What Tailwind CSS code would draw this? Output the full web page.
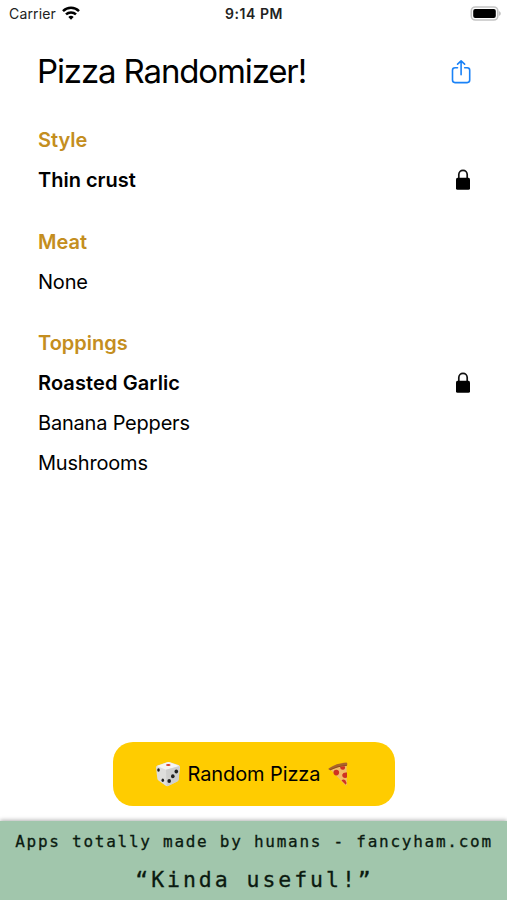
<!DOCTYPE html>
<html lang="en">
<head>
  <meta charset="UTF-8" />
  <meta name="viewport" content="width=device-width, initial-scale=1.0" />
  <title>Pizza Randomizer!</title>

  <!-- Tailwind CSS -->
  <script src="https://cdn.jsdelivr.net/npm/@tailwindcss/browser@4"></script>
</head>
<body class="bg-white text-black font-['Inter',sans-serif]">
<div class="flex flex-col h-[900px] w-[507px] overflow-hidden">

  <!-- Status Bar -->
  <header class="grid grid-cols-3 items-center h-[26px] mb-[2px] pl-[9px] pr-[6px] text-[14px] text-[#222]">
    <div class="flex items-center gap-[6px]">
      <span class="tracking-[0.15px]">Carrier</span>
      <svg class="w-[18px] h-[14px] -mt-[1px]" viewBox="0 0 18 14" fill="none" stroke="#000" stroke-width="2.5">
        <path d="M1 5.1a11.5 11.5 0 0 1 16 0" />
        <path d="M4 8.4a7.2 7.2 0 0 1 10 0" />
        <path d="M9 13.8 6.3 11.1a3.8 3.8 0 0 1 5.4 0Z" fill="#000" stroke="none" />
      </svg>
    </div>
    <span class="text-center font-semibold tracking-[0.55px] -ml-[2px] whitespace-nowrap">9:14 PM</span>
    <svg class="w-[31px] h-[15px] justify-self-end" viewBox="0 0 31 15">
      <rect x="1.3" y="1" width="26.5" height="13" rx="4" fill="#fff" stroke="#c4c4c4" stroke-width="1.6" />
      <rect x="3.2" y="3" width="22.6" height="9" rx="2" />
      <path d="M29.3 5.2c1.7.6 1.7 4 0 4.6Z" fill="#aaa" />
    </svg>
  </header>

  <!-- Pizza -->
  <main class="flex-1 pl-[38px] pr-[36px] text-[20px]">
    <div class="flex justify-between items-center h-[88px]">
      <h1 class="text-[33px] tracking-[-1.13px] -ml-[1px] whitespace-nowrap">Pizza Randomizer!</h1>
      <button aria-label="Share">
        <svg class="w-5 h-6" viewBox="0 0 20 24" fill="none" stroke="#1a82f7" stroke-width="1.6" stroke-linecap="round" stroke-linejoin="round">
          <path d="M6.5 7.8H4A2.5 2.5 0 0 0 1.5 10.3v9.8A2.5 2.5 0 0 0 4 22.6h12.2a2.5 2.5 0 0 0 2.5-2.5v-9.8a2.5 2.5 0 0 0-2.5-2.5h-2.5" />
          <path d="M10.1 14.8V1M6.6 4.2 10.1.9l3.5 3.3" />
        </svg>
      </button>
    </div>

    <section class="mt-[4px]">
      <h2 class="h-10 leading-10 font-semibold text-[#c48e20]">Style</h2>
      <div class="flex justify-between items-center h-10 font-semibold">
        <span>Thin crust</span>
        <svg class="w-4 h-[22px]" viewBox="0 0 16 22">
          <path d="M3.8 11V5.5a4.2 4.2 0 0 1 8.4 0V11" fill="none" stroke="#111" stroke-width="1.7" />
          <rect x="1" y="8.8" width="14" height="12" rx="1.6" />
        </svg>
      </div>
    </section>

    <section class="mt-[22px]">
      <h2 class="h-10 leading-10 font-semibold text-[#c48e20]">Meat</h2>
      <div class="flex items-center h-10"><span class="tracking-[-0.2px]">None</span></div>
    </section>

    <section class="mt-[21px]">
      <h2 class="h-10 leading-10 font-semibold text-[#c48e20]">Toppings</h2>
      <div class="flex justify-between items-center h-10 font-semibold">
        <span class="tracking-[0.1px]">Roasted Garlic</span>
        <svg class="w-4 h-[22px]" viewBox="0 0 16 22">
          <path d="M3.8 11V5.5a4.2 4.2 0 0 1 8.4 0V11" fill="none" stroke="#111" stroke-width="1.7" />
          <rect x="1" y="8.8" width="14" height="12" rx="1.6" />
        </svg>
      </div>
      <div class="flex items-center h-10"><span class="tracking-[-0.2px]">Banana Peppers</span></div>
      <div class="flex items-center h-10"><span class="tracking-[-0.2px]">Mushrooms</span></div>
    </section>
  </main>

  <!-- Random Button -->
  <button class="flex items-center self-center w-[282px] h-[64px] mb-[15px] pl-[42px] rounded-[20px] bg-[#ffcc00] text-[20px]">
    <svg class="w-[26px] h-[26px]" viewBox="0 0 26 26">
      <path d="M2.5 4.5 12 1.2Q13.5.7 15 1.2L23.5 4Q25.2 4.8 25 6.4L23.6 18.5Q23.4 19.8 22.2 20.5L13 25Q11.8 25.5 10.7 24.8L3.5 19.5Q2.5 18.8 2.3 17.5L1 6.5Q1 5 2.5 4.5Z" fill="#dededc" />
      <path d="M2 5 12.5 1.2Q13.5.9 14.5 1.2L24.3 5 11 8.7Z" fill="#f5f5f3" />
      <path d="M11 8.7 24.8 5 23.6 18.5Q23.4 19.8 22.2 20.5L13 25Q11.8 25.4 11.5 24Z" fill="#cfcfcd" />
      <ellipse cx="13.3" cy="4" rx="2.3" ry="1.1" fill="#d5402f" />
      <g fill="#222">
        <ellipse cx="3.5" cy="9" rx="1.3" ry="1.8" />
        <ellipse cx="7.8" cy="19.3" rx="1.3" ry="1.8" />
        <ellipse cx="21.3" cy="10.6" rx="1.8" ry="2" />
        <ellipse cx="17.8" cy="15.2" rx="1.8" ry="2" />
        <ellipse cx="14.2" cy="20" rx="1.8" ry="2" />
      </g>
    </svg>
    <span class="ml-[7px] tracking-[-0.1px] whitespace-nowrap">Random Pizza</span>
    <svg class="w-5 h-6 ml-[8px]" viewBox="0 0 20 24">
      <path d="M2 7 18.5 3.2 19 22.5Q18 24.3 16.5 22.5Z" fill="#f1bd68" />
      <path d="M.5 6.5Q8 1.2 18.5.5 20 1.5 19 3.7 9.5 4.3 2.4 8.3.2 8.3.5 6.5Z" fill="#a9632c" />
      <path d="M2 7.9Q9.5 3.9 18.8 3.4" fill="none" stroke="#7a3a16" stroke-width=".6" />
      <g fill="#cf3222">
        <circle cx="8.3" cy="10.6" r="2.8" />
        <path d="M12 5.3q2.7-1.3 5-.8.5 3-2 3.300-2.500.2-3-2.500Z" />
        <path d="M19 10.5q-4-.5-4.800 2.300-.2 3 3 3.200l1.800-.5Z" />
        <path d="M13.5 18.5q1.800-1.800 4 0 1.800 2.500.3 4.300Z" />
      </g>
    </svg>
  </button>

  <!-- Banner -->
  <footer class="flex flex-col items-center h-[79px] bg-[#a1c6ac] text-[#0b1a10] font-['DejaVu_Sans_Mono',monospace] whitespace-nowrap shadow-[0_-1px_4px_rgba(0,0,0,0.3)]">
    <p class="mt-[10px] ml-[1px] h-[22px] leading-[22px] text-[16px] tracking-[1.74px] [-webkit-text-stroke:0.3px_#0b1a10]">Apps totally made by humans - fancyham.com</p>
    <p class="mt-[11px] ml-[2px] h-[32px] leading-[32px] text-[21.5px] tracking-[2.95px] [-webkit-text-stroke:0.3px_#0b1a10]">“Kinda useful!”</p>
  </footer>

</div>
</body>
</html>
